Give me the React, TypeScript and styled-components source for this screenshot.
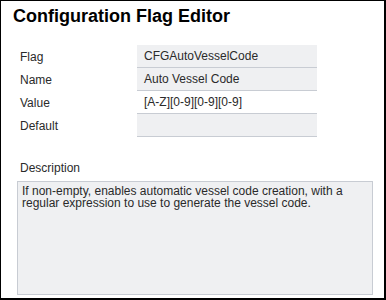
import React from "react";
import styled, { createGlobalStyle } from "styled-components";

const GlobalStyle = createGlobalStyle`
  html, body { margin: 0; padding: 0; background: #ffffff; }
  body { font-family: "Liberation Sans", Arial, sans-serif; }
  * { box-sizing: border-box; }
`;

const Window = styled.div`
  width: 386px;
  height: 300px;
  border-style: solid;
  border-color: #000000;
  border-width: 1px 2px 2px 1px;
  background: #ffffff;
  display: flex;
  flex-direction: column;
  padding: 5px 11px 3px 16px;
`;

const Title = styled.h1`
  margin: 0 0 0 -4px;
  font-size: 18px;
  line-height: 20px;
  font-weight: bold;
  color: #000000;
`;

const FieldGrid = styled.div`
  display: grid;
  grid-template-columns: 117px 180px;
  margin-top: 19px;
  margin-left: 3px;
`;

const Label = styled.div`
  font-size: 12px;
  color: #2a2a2a;
  display: flex;
  align-items: center;
  height: 23px;
`;

const FieldValue = styled.div<{ $filled: boolean }>`
  height: 23px;
  padding: 0 7px;
  display: flex;
  align-items: center;
  font-size: 12px;
  color: #2a2a2a;
  background: ${(p) => (p.$filled ? "#eff0f2" : "#ffffff")};
  border-bottom: 1px solid #c8ccd3;
`;

const DescLabel = styled.div`
  margin: 24px 0 6px 3px;
  font-size: 12px;
  line-height: 14px;
  color: #2a2a2a;
`;

const DescBox = styled.div`
  flex: 1;
  border: 1px solid #c8ccd3;
  background: #eff0f2;
  padding: 3px 4px;
  font-size: 12px;
  line-height: 12px;
  color: #2a2a2a;
`;

const rows: { label: string; value: string; filled: boolean }[] = [
  { label: "Flag", value: "CFGAutoVesselCode", filled: true },
  { label: "Name", value: "Auto Vessel Code", filled: true },
  { label: "Value", value: "[A-Z][0-9][0-9][0-9]", filled: false },
  { label: "Default", value: "", filled: true },
];

export default function App() {
  return (
    <>
      <GlobalStyle />
      <Window>
        <Title>Configuration Flag Editor</Title>
        <FieldGrid>
          {rows.map((r) => (
            <React.Fragment key={r.label}>
              <Label>{r.label}</Label>
              <FieldValue $filled={r.filled}>{r.value}</FieldValue>
            </React.Fragment>
          ))}
        </FieldGrid>
        <DescLabel>Description</DescLabel>
        <DescBox>
          If non-empty, enables automatic vessel code creation, with a regular expression to use to
          generate the vessel code.
        </DescBox>
      </Window>
    </>
  );
}
